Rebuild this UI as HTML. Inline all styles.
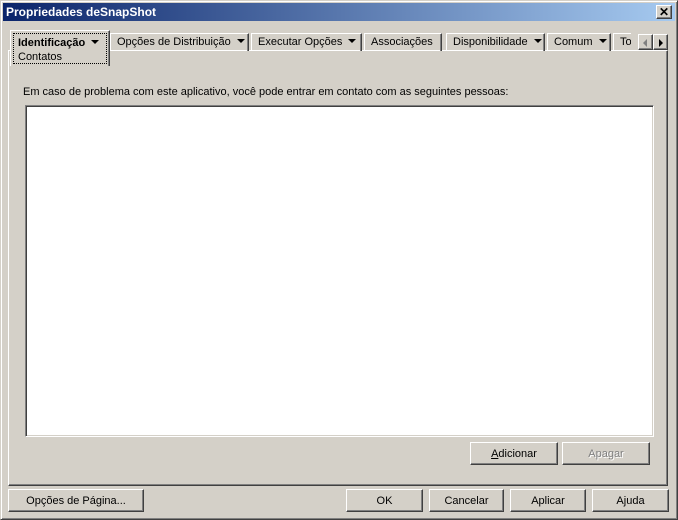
<html><head><style>
body{margin:0;width:678px;height:520px;background:#d4d0c8;font-family:"Liberation Sans",sans-serif;font-size:11px;position:relative;overflow:hidden}
.a{position:absolute}
.win{left:0;top:0;width:676px;height:518px;border:1px solid;border-color:#d4d0c8 #404040 #404040 #d4d0c8;box-shadow:inset 1px 1px #fff,inset -1px -1px #808080}
.title{left:3px;top:3px;width:672px;height:18px;background:linear-gradient(90deg,#0a246a,#a6caf0);color:#fff;font-weight:bold;font-size:12px;line-height:18px;padding-left:3px;box-sizing:border-box}
.btn{box-sizing:border-box;border:1px solid;border-color:#fff #404040 #404040 #fff;box-shadow:inset -1px -1px #808080;text-align:center;line-height:22px;color:#000}
.tab{top:33px;height:18px;box-sizing:border-box;border:1px solid;border-bottom:none;border-color:#fff #404040 #fff #fff;box-shadow:inset -1px 0 #808080;line-height:16px;padding-left:6px;white-space:nowrap;overflow:hidden}
.tri{display:inline-block;width:0;height:0;border-left:4px solid transparent;border-right:4px solid transparent;border-top:4px solid #000;margin-left:6px;vertical-align:2px}
</style></head><body>
<div class="a win"></div>
<div class="a title">Propriedades deSnapShot</div>
<div class="a btn" style="left:656px;top:5px;width:16px;height:14px;line-height:12px;font-size:12px;font-weight:bold;background:#d4d0c8">✕</div>
<div class="a" style="left:8px;top:50px;width:660px;height:436px;box-sizing:border-box;border:1px solid;border-color:#fff #404040 #404040 #fff;box-shadow:inset -1px -1px #808080"></div>
<div class="a tab" style="left:110px;width:139px">Opções de Distribuição<span class="tri"></span></div>
<div class="a tab" style="left:251px;width:111px">Executar Opções<span class="tri"></span></div>
<div class="a tab" style="left:364px;width:78px">Associações</div>
<div class="a tab" style="left:446px;width:99px">Disponibilidade<span class="tri"></span></div>
<div class="a tab" style="left:547px;width:64px">Comum<span class="tri"></span></div>
<div class="a tab" style="left:613px;width:18px;border-right:none;box-shadow:none">To</div>
<div class="a" style="left:10px;top:30px;width:100px;height:36px;background:#d4d0c8;border:1px solid;border-bottom:none;border-color:#fff #404040 #fff #fff;box-sizing:border-box;box-shadow:inset -1px 0 #808080"></div>
<div class="a" style="left:13px;top:33px;width:94px;height:31px;border:1px dotted #000;box-sizing:border-box;padding:2px 0 0 4px;line-height:14px"><b>Identificação</b><span class="tri"></span><br>Contatos</div>
<div class="a btn" style="left:638px;top:34px;width:15px;height:16px;background:#d4d0c8"><span style="position:absolute;left:4px;top:4px;border-top:4px solid transparent;border-bottom:4px solid transparent;border-right:4px solid #808080"></span></div>
<div class="a btn" style="left:653px;top:34px;width:15px;height:16px;background:#d4d0c8"><span style="position:absolute;left:5px;top:4px;border-top:4px solid transparent;border-bottom:4px solid transparent;border-left:4px solid #000"></span></div>
<div class="a" style="left:23px;top:86px">Em caso de problema com este aplicativo, você pode entrar em contato com as seguintes pessoas:</div>
<div class="a" style="left:25px;top:105px;width:629px;height:332px;background:#fff;box-sizing:border-box;border:1px solid;border-color:#808080 #fff #fff #808080;box-shadow:inset 1px 1px #404040,inset -1px -1px #d4d0c8"></div>
<div class="a btn" style="left:470px;top:442px;width:88px;height:23px"><u>A</u>dicionar</div>
<div class="a btn" style="left:562px;top:442px;width:88px;height:23px;color:#808080;text-shadow:1px 1px #fff">Apagar</div>
<div class="a btn" style="left:8px;top:489px;width:136px;height:23px">Opções de Página...</div>
<div class="a btn" style="left:346px;top:489px;width:77px;height:23px">OK</div>
<div class="a btn" style="left:429px;top:489px;width:75px;height:23px">Cancelar</div>
<div class="a btn" style="left:510px;top:489px;width:76px;height:23px">Aplicar</div>
<div class="a btn" style="left:592px;top:489px;width:77px;height:23px">Ajuda</div>
</body></html>
